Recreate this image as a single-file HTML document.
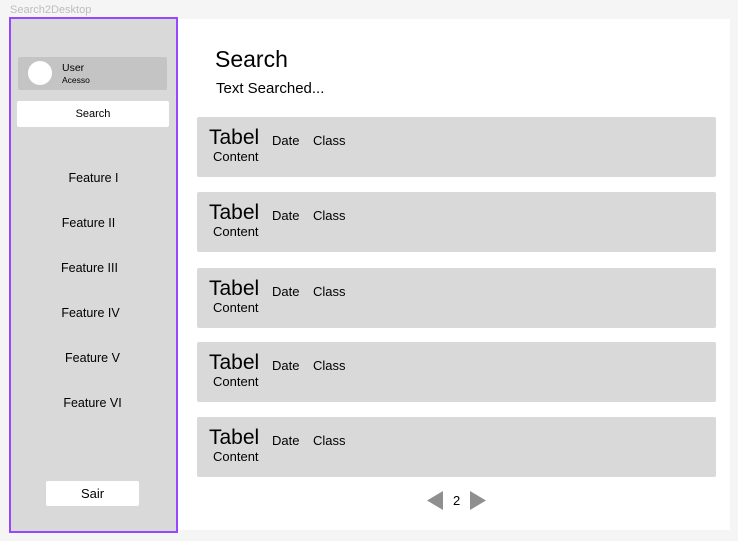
<!DOCTYPE html>
<html><head><style>
*{margin:0;padding:0;box-sizing:border-box}
body{width:738px;height:541px;background:#f5f5f5;font-family:"Liberation Sans",sans-serif;position:relative;overflow:hidden;color:#000}
.a{position:absolute}
.title{left:10px;top:4px;font-size:11px;color:#bdbdbd}
.side{left:9px;top:17px;width:169px;height:516px;background:#d9d9d9;border:2px solid #9747ff}
.main{left:178px;top:19px;width:552px;height:511px;background:#fff}
.user{left:18px;top:57px;width:149px;height:33px;background:#c4c4c4;border-radius:2px}
.circ{left:28px;top:61px;width:24px;height:24px;border-radius:50%;background:#fff}
.btn{background:#fff;border-radius:2px;text-align:center;font-size:11px}
.feat{width:169px;left:9px;text-align:center;font-size:12.5px}
.card{left:197px;width:519px;height:60px;background:#d9d9d9;border-radius:2px}
.card .t{position:absolute;left:12px;top:9px;font-size:21px}
.card .d{position:absolute;left:75px;top:16px;font-size:13px}
.card .c{position:absolute;left:116px;top:16px;font-size:13px}
.card .n{position:absolute;left:16px;top:32px;font-size:13px}
</style></head><body>
<div class="a title">Search2Desktop</div>
<div class="a side"></div>
<div class="a main"></div>
<div class="a user"></div>
<div class="a circ"></div>
<div class="a" style="left:62px;top:62px;font-size:10.5px">User</div>
<div class="a" style="left:62px;top:75px;font-size:8.5px">Acesso</div>
<div class="a btn" style="left:17px;top:101px;width:152px;height:26px;line-height:26px">Search</div>
<div class="a feat" style="top:171px">Feature I</div>
<div class="a feat" style="top:216px;left:4px">Feature II</div>
<div class="a feat" style="top:261px;left:5px">Feature III</div>
<div class="a feat" style="top:306px;left:6px">Feature IV</div>
<div class="a feat" style="top:351px;left:8px">Feature V</div>
<div class="a feat" style="top:396px;left:8px">Feature VI</div>
<div class="a btn" style="left:46px;top:481px;width:93px;height:25px;line-height:25px;font-size:13px">Sair</div>
<div class="a" style="left:215px;top:46px;font-size:23px">Search</div>
<div class="a" style="left:216px;top:80px;font-size:15px">Text Searched...</div>
<div class="a card" style="top:117px"><span class="t">Tabel</span><span class="d">Date</span><span class="c">Class</span><span class="n">Content</span></div>
<div class="a card" style="top:192px"><span class="t">Tabel</span><span class="d">Date</span><span class="c">Class</span><span class="n">Content</span></div>
<div class="a card" style="top:268px"><span class="t">Tabel</span><span class="d">Date</span><span class="c">Class</span><span class="n">Content</span></div>
<div class="a card" style="top:342px"><span class="t">Tabel</span><span class="d">Date</span><span class="c">Class</span><span class="n">Content</span></div>
<div class="a card" style="top:417px"><span class="t">Tabel</span><span class="d">Date</span><span class="c">Class</span><span class="n">Content</span></div>
<svg class="a" style="left:426px;top:490px" width="62" height="21"><polygon points="17,1 17,20 1,10.5" fill="#8f8f8f"/><polygon points="44,1 44,20 60,10.5" fill="#8f8f8f"/></svg>
<div class="a" style="left:453px;top:493px;font-size:13px">2</div>
</body></html>
